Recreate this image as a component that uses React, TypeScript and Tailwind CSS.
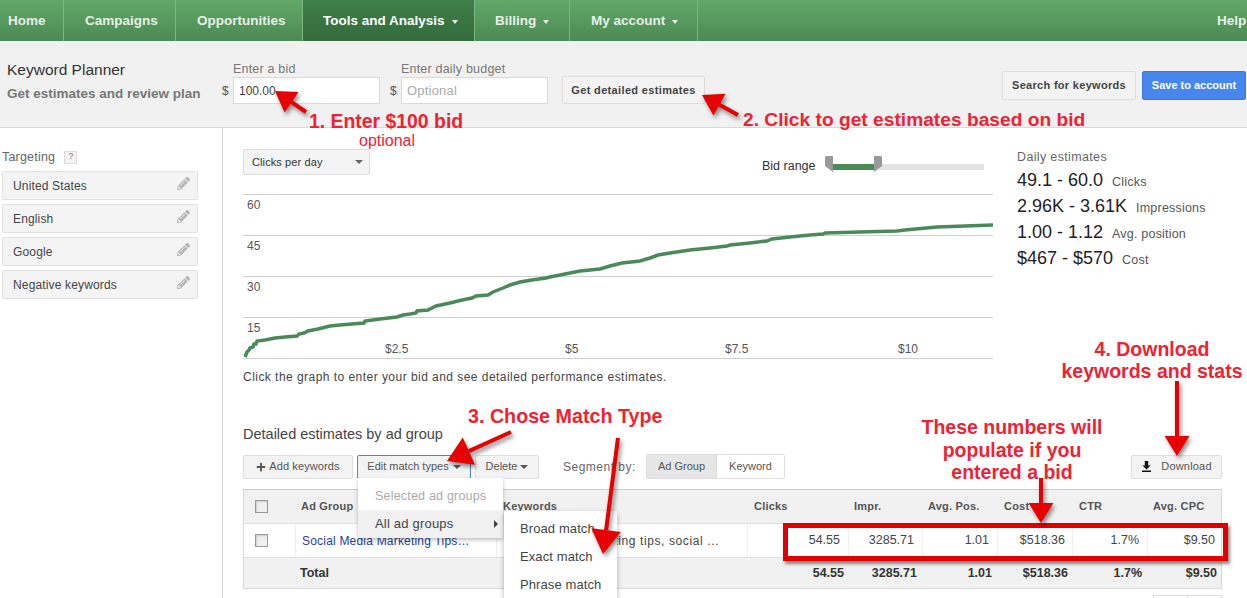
import { FaPencilAlt, FaPlus } from "react-icons/fa";

const NAV = [
  { t: "Home", w: "w-[64px] pl-[8px]" },
  { t: "Campaigns", w: "w-[112px] pl-[21px]" },
  { t: "Opportunities", w: "w-[127px] pl-[21px]" },
  { t: "Tools and Analysis", w: "w-[172px] pl-[20px]", caret: true, active: true },
  { t: "Billing", w: "w-[95px] pl-[20px]", caret: true },
  { t: "My account", w: "w-[128px] pl-[21px]", caret: true },
];

const CHART =
  "245,357 247,352 249,350 250,348 253,347 254,344 256,344 257,341 265,340 275,338 285,337 297,336 299,334 304,333 308,331 318,329 330,326 340,325 352,324 364,323 365,321 380,319 397,317 403,315 410,314 416,313 417,311 428,310 436,306 450,303 462,300 472,298 476,296 488,295 493,292 503,288 510,285 520,282 532,280 546,278 550,277 565,274 580,271 590,270 600,269 610,266 622,263 640,261 650,258 658,255 670,253 690,250 710,248 727,246 730,245 750,243 767,241 772,239 790,237 810,235 823,234 825,233 860,232 897,231 905,230 937,227 965,226 993,225";

const COLS = "grid-cols-[51px_201px_251px_101px_74px_75px_75px_75px_77px]";

function Arrow({ x1, y1, x2, y2, head = 20, w = 4 }: { x1: number; y1: number; x2: number; y2: number; head?: number; w?: number }) {
  const d = Math.hypot(x2 - x1, y2 - y1);
  const ux = (x2 - x1) / d;
  const uy = (y2 - y1) / d;
  const bx = x2 - ux * head;
  const by = y2 - uy * head;
  const hw = head * 0.62;
  const pts = `${x2},${y2} ${bx - uy * hw},${by + ux * hw} ${bx + uy * hw},${by - ux * hw}`;
  return (
    <g>
      <line x1={x1} y1={y1} x2={bx} y2={by} stroke="#e60000" strokeWidth={w} />
      <polygon points={pts} fill="#e60000" />
    </g>
  );
}

function Field({ label, value, placeholder }: { label: string; value?: string; placeholder?: string }) {
  return (
    <div className="w-[158px] mt-[21px]">
      <div className="ml-[11px] text-[12.5px] leading-[15px] text-[#777] tracking-[0.2px]">{label}</div>
      <div className="flex items-center">
        <span className="w-[11px] text-[12px] text-[#555]">$</span>
        <div className="w-[147px] h-[27px] bg-white border border-[#d9d9d9] flex items-center pl-[5px] text-[12px]">
          {value ? <span className="text-[#444]">{value}</span> : <span className="text-[#aaa] text-[13px] tracking-[0.2px]">{placeholder}</span>}
        </div>
      </div>
    </div>
  );
}

function TargetRow({ t }: { t: string }) {
  return (
    <div className="h-[29px] bg-[#f4f4f4] border border-[#e0e0e0] rounded-[2px] flex items-center justify-between pl-[10px] pr-[7px] text-[12px] text-[#444] tracking-[0.15px]">
      <span>{t}</span>
      <FaPencilAlt className="text-[#b5b5b5] text-[13px] mb-[5px]" />
    </div>
  );
}

function Btn({ className, children }: { className: string; children: React.ReactNode }) {
  return (
    <div className={`h-[24px] flex items-center justify-center bg-[#f3f3f3] border rounded-[2px] text-[11px] text-[#555] ${className}`}>
      {children}
    </div>
  );
}

function Stat({ a, b }: { a: string; b: string }) {
  return (
    <div className="h-[26px] flex items-center gap-[9px]">
      <span className="text-[18px] text-[#222]">{a}</span>
      <span className="text-[12.5px] text-[#555] mt-[5px] tracking-[0.2px]">{b}</span>
    </div>
  );
}

function Check() {
  return (
    <div className="w-[13px] h-[13px] border border-[#999] bg-[#f0f0f0] shadow-[inset_1px_1px_2px_#ccc] ml-[11px]" />
  );
}

function App() {
  const chartLines = [194, 235, 276, 317, 358];
  return (
    <div className="relative w-[1247px] h-[598px] overflow-hidden bg-white font-['Liberation_Sans',Arial,sans-serif] text-[#333]">
      {/* nav */}
      <div className="h-[41px] flex bg-gradient-to-b from-[#62a869] to-[#4c8a54] text-[13.5px] font-bold text-[#e6f0e6]">
        {NAV.map((n) => (
          <div
            key={n.t}
            className={`${n.w} h-full pt-[2px] flex items-center gap-[7px] border-r border-[#7cb682] ${n.active ? "bg-gradient-to-b from-[#3f7f49] to-[#356b3d] text-white" : ""}`}
          >
            <span>{n.t}</span>
            {n.caret && <span className="w-0 h-0 border-x-[3.5px] border-x-transparent border-t-[4px] border-t-[#e6f0e6]" />}
          </div>
        ))}
        <div className="ml-auto pt-[2px] flex items-center w-[30px]">Help</div>
      </div>

      {/* header */}
      <div className="h-[87px] flex bg-[#f1f1f1] border-b border-[#d9d9d9]">
        <div className="w-[222px] pl-[7px] pt-[20px]">
          <div className="text-[15.5px] leading-[18px] text-[#333]">Keyword Planner</div>
          <div className="text-[13.5px] leading-[16px] mt-[7px] font-bold text-[#777]">Get estimates and review plan</div>
        </div>
        <Field label="Enter a bid" value="100.00" />
        <div className="w-[10px]" />
        <Field label="Enter daily budget" placeholder="Optional" />
        <div className="w-[14px]" />
        <div className="mt-[35px] w-[143px] h-[28px] flex items-center justify-center bg-[#f3f3f3] border border-[#ddd] rounded-[2px] text-[11px] font-bold text-[#444] tracking-[0.35px]">
          Get detailed estimates
        </div>
        <div className="ml-auto mt-[30px] flex gap-[6px] pr-[1px]">
          <div className="w-[134px] h-[29px] flex items-center justify-center bg-[#f3f3f3] border border-[#ddd] rounded-[2px] text-[11px] font-bold text-[#444] tracking-[0.3px]">
            Search for keywords
          </div>
          <div className="w-[104px] h-[29px] flex items-center justify-center bg-[#4787ed] border border-[#3b78e0] rounded-[2px] text-[11px] font-bold text-white">
            Save to account
          </div>
        </div>
      </div>

      {/* body */}
      <div className="flex h-[470px]">
        <aside className="w-[223px] shrink-0 border-r border-[#d9d9d9] pl-[2px] pr-[24px]">
          <div className="h-[43px] pt-[15px] flex items-center gap-[9px] text-[12.5px] text-[#666] tracking-[0.2px]">
            <span>Targeting</span>
            <span className="w-[13px] h-[13px] border border-[#ddd] bg-[#f4f4f4] text-[9px] flex items-center justify-center text-[#777]">?</span>
          </div>
          <div className="flex flex-col gap-[4px]">
            <TargetRow t="United States" />
            <TargetRow t="English" />
            <TargetRow t="Google" />
            <TargetRow t="Negative keywords" />
          </div>
        </aside>

        <main className="flex-1 pl-[20px] pr-[25px] min-w-0">
          {/* chart + estimates */}
          <div className="flex">
            <div className="w-[750px] shrink-0">
              <div className="h-[66px] pt-[21px] flex items-start">
                <div className="w-[127px] h-[26px] bg-[#f4f4f4] border border-[#ddd] rounded-[2px] flex items-center justify-between pl-[8px] pr-[6px] text-[11px] text-[#333] tracking-[0.1px]">
                  <span>Clicks per day</span>
                  <span className="w-0 h-0 border-x-[4px] border-x-transparent border-t-[4px] border-t-[#666]" />
                </div>
                <div className="ml-[392px] mt-[8px] text-[12.5px] text-[#333] w-[63px]">Bid range</div>
                <div className="w-[159px] h-[16px] mt-[7px] flex items-center">
                  <svg width="159" height="16" viewBox="0 0 159 16">
                    <rect x="8" y="8" width="151" height="6" fill="#e4e4e4" />
                    <rect x="8" y="8" width="42" height="6" fill="#4a8a54" />
                    <path d="M1 0h7v16l-8-6V1z" fill="#999" />
                    <path d="M49 0h7l1 1v9l-8 6z" fill="#999" />
                  </svg>
                </div>
              </div>
              {/* chart */}
              <div className="relative h-[165px] text-[12px] text-[#555]">
                <svg className="absolute inset-0" width="750" height="165" viewBox="243 194 750 165">
                  {chartLines.map((y) => (
                    <line key={y} x1="243" x2="993" y1={y + 0.5} y2={y + 0.5} stroke="#cfcfcf" strokeWidth="1" />
                  ))}
                  <polyline points={CHART} fill="none" stroke="#4a8a5a" strokeWidth="3.5" />
                </svg>
                <span className="absolute left-[4px] top-[2px]">60</span>
                <span className="absolute left-[4px] top-[43px]">45</span>
                <span className="absolute left-[4px] top-[84px]">30</span>
                <span className="absolute left-[4px] top-[125px]">15</span>
                <span className="absolute left-[142px] top-[146px]">$2.5</span>
                <span className="absolute left-[322px] top-[146px]">$5</span>
                <span className="absolute left-[482px] top-[146px]">$7.5</span>
                <span className="absolute left-[655px] top-[146px]">$10</span>
              </div>
            </div>
            <div className="ml-[24px] pt-[22px]">
              <div className="text-[12.5px] leading-[15px] text-[#666] tracking-[0.35px] mb-[2px]">Daily estimates</div>
              <Stat a="49.1 - 60.0" b="Clicks" />
              <Stat a="2.96K - 3.61K" b="Impressions" />
              <Stat a="1.00 - 1.12" b="Avg. position" />
              <Stat a="$467 - $570" b="Cost" />
            </div>
          </div>

          <div className="mt-[11px] text-[12px] leading-[14px] text-[#444] tracking-[0.46px]">
            Click the graph to enter your bid and see detailed performance estimates.
          </div>

          <div className="mt-[42px] text-[14.5px] leading-[16px] text-[#444]">Detailed estimates by ad group</div>

          {/* toolbar */}
          <div className="mt-[12px] flex items-center h-[25px]">
            <Btn className="w-[110px] border-[#ddd] gap-[3px]">
              <FaPlus className="text-[10px] text-[#555]" />
              <span className="tracking-[0.1px]">Add keywords</span>
            </Btn>
            <Btn className="w-[114px] ml-[4px] border-[#4d84d8] gap-[4px]">
              <span>Edit match types</span>
              <span className="w-0 h-0 border-x-[4px] border-x-transparent border-t-[4px] border-t-[#555]" />
            </Btn>
            <Btn className="w-[64px] ml-[4px] border-[#ddd] gap-[3px]">
              <span>Delete</span>
              <span className="w-0 h-0 border-x-[4px] border-x-transparent border-t-[4px] border-t-[#555]" />
            </Btn>
            <span className="ml-[24px] w-[83px] text-[12px] text-[#666] tracking-[0.5px]">Segment by:</span>
            <div className="flex h-[25px] border border-[#ddd] rounded-[2px] text-[11px] text-[#555]">
              <div className="w-[70px] flex items-center justify-center bg-[#e6e6e6] border-r border-[#ddd]">Ad Group</div>
              <div className="w-[67px] flex items-center justify-center bg-white">Keyword</div>
            </div>
            <Btn className="w-[91px] ml-auto border-[#ddd] gap-[9px] text-[10px] tracking-[0.2px]">
              <svg width="11" height="11" viewBox="0 0 11 11">
                <path d="M3.8 0h3.4v4.5h2.4L5.5 8.6 1.4 4.5h2.4z" fill="#111" />
                <rect x="1" y="9.5" width="9" height="1.5" fill="#111" />
              </svg>
              <span>Download</span>
            </Btn>
          </div>

          {/* table */}
          <div className="mt-[10px] border border-[#d9d9d9] border-t-[#ccc] text-[12.5px]">
            <div className={`grid ${COLS} h-[34px] items-center bg-[#f1f1f1] border-b border-[#e0e0e0] text-[11px] font-bold text-[#555] tracking-[0.2px]`}>
              <Check />
              <span className="pl-[6px]">Ad Group</span>
              <span className="pl-[7px]">Keywords</span>
              <span className="pl-[7px]">Clicks</span>
              <span className="pl-[6px]">Impr.</span>
              <span className="pl-[6px]">Avg. Pos.</span>
              <span className="pl-[7px]">Cost</span>
              <span className="pl-[7px]">CTR</span>
              <span className="pl-[6px]">Avg. CPC</span>
            </div>
            <div className={`grid ${COLS} h-[34px] items-stretch bg-white border-b border-[#e0e0e0] text-[#444] [&>*]:flex [&>*]:items-center`}>
              <div><Check /></div>
              <div className="pl-[6px] text-[12px] text-[#1c3fa0] border-l border-[#eee] whitespace-nowrap tracking-[0.2px]">Social Media Marketing Tips…</div>
              <div className="justify-end pr-[28px] text-[12px] whitespace-nowrap border-l border-[#eee] tracking-[0.6px]">marketing tips, social ...</div>
              <div className="justify-end pr-[8px] border-l border-[#eee]">54.55</div>
              <div className="justify-end pr-[8px] border-l border-[#eee]">3285.71</div>
              <div className="justify-end pr-[8px] border-l border-[#eee]">1.01</div>
              <div className="justify-end pr-[7px] border-l border-[#eee]">$518.36</div>
              <div className="justify-end pr-[8px] border-l border-[#eee]">1.7%</div>
              <div className="justify-end pr-[9px] border-l border-[#eee]">$9.50</div>
            </div>
            <div className={`grid ${COLS} h-[30px] pt-[1px] items-center bg-[#f1f1f1] font-bold text-[#333] text-right`}>
              <span />
              <span className="text-left pl-[5px]">Total</span>
              <span />
              <span className="pr-[4px]">54.55</span>
              <span className="pr-[5px]">3285.71</span>
              <span className="pr-[5px]">1.01</span>
              <span className="pr-[4px]">$518.36</span>
              <span className="pr-[5px]">1.7%</span>
              <span className="pr-[7px]">$9.50</span>
            </div>
          </div>

          <div className="mt-[6px] ml-auto w-[69px] h-[30px] flex border border-[#ddd]">
            <div className="flex-1 border-r border-[#ddd]" />
            <div className="flex-1" />
          </div>
        </main>
      </div>

      {/* dropdown menus */}
      <div className="absolute left-[358px] top-[478px] w-[145px] h-[60px] bg-white shadow-[0_2px_4px_rgba(0,0,0,0.25)] text-[13px] tracking-[0.2px]">
        <div className="h-[32px] pl-[17px] pt-[4px] flex items-center text-[#aaa] text-[12.5px]">Selected ad groups</div>
        <div className="h-[28px] pl-[17px] pr-[5px] flex items-center justify-between bg-[#f1f1f1] text-[#444]">
          <span>All ad groups</span>
          <span className="w-0 h-0 border-y-[4px] border-y-transparent border-l-[4px] border-l-[#444]" />
        </div>
      </div>
      <div className="absolute left-[504px] top-[511px] w-[113px] h-[100px] bg-white shadow-[0_2px_5px_rgba(0,0,0,0.3)] pl-[16px] pt-[4px] text-[13px] text-[#444] tracking-[0.1px]">
        <div className="h-[28px] flex items-center">Broad match</div>
        <div className="h-[28px] flex items-center">Exact match</div>
        <div className="h-[28px] flex items-center">Phrase match</div>
      </div>

      {/* highlight box */}
      <div className="absolute left-[783px] top-[523px] w-[445px] h-[38px] border-[5px] border-[#e00000] shadow-[2px_3px_3px_rgba(0,0,0,0.45)]" />

      {/* arrows */}
      <svg className="absolute inset-0 pointer-events-none drop-shadow-[2px_3px_2px_rgba(0,0,0,0.45)]" width="1247" height="598" viewBox="0 0 1247 598">
        <Arrow x1={306} y1={112} x2={275} y2={91} />
        <Arrow x1={738} y1={115} x2={702} y2={95} />
        <Arrow x1={511} y1={432} x2={447} y2={461} head={24} />
        <Arrow x1={618} y1={438} x2={603} y2={554} head={24} />
        <Arrow x1={1041} y1={478} x2={1041} y2={523} head={20} />
        <Arrow x1={1177} y1={381} x2={1177} y2={456} head={20} />
      </svg>

      {/* red notes */}
      <div className="absolute left-[309px] top-[110px] text-[19.4px] leading-[22px] font-bold text-[#ee2233] whitespace-nowrap">1. Enter $100 bid</div>
      <div className="absolute left-[359px] top-[131px] text-[16px] leading-[20px] text-[#ee2233] whitespace-nowrap">optional</div>
      <div className="absolute left-[743px] top-[109px] text-[19.2px] leading-[22px] font-bold text-[#ee2233] whitespace-nowrap">2. Click to get estimates based on bid</div>
      <div className="absolute left-[468px] top-[405px] text-[19.7px] leading-[22px] font-bold text-[#ee2233] whitespace-nowrap">3. Chose Match Type</div>
      <div className="absolute left-[1052px] top-[338px] w-[200px] text-center text-[19.5px] leading-[22px] font-bold text-[#ee2233]">
        4. Download<br />keywords and stats
      </div>
      <div className="absolute left-[902px] top-[416px] w-[220px] text-center text-[19.5px] leading-[22.5px] font-bold text-[#ee2233]">
        These numbers will<br />populate if you<br />entered a bid
      </div>
    </div>
  );
}

export default App;
